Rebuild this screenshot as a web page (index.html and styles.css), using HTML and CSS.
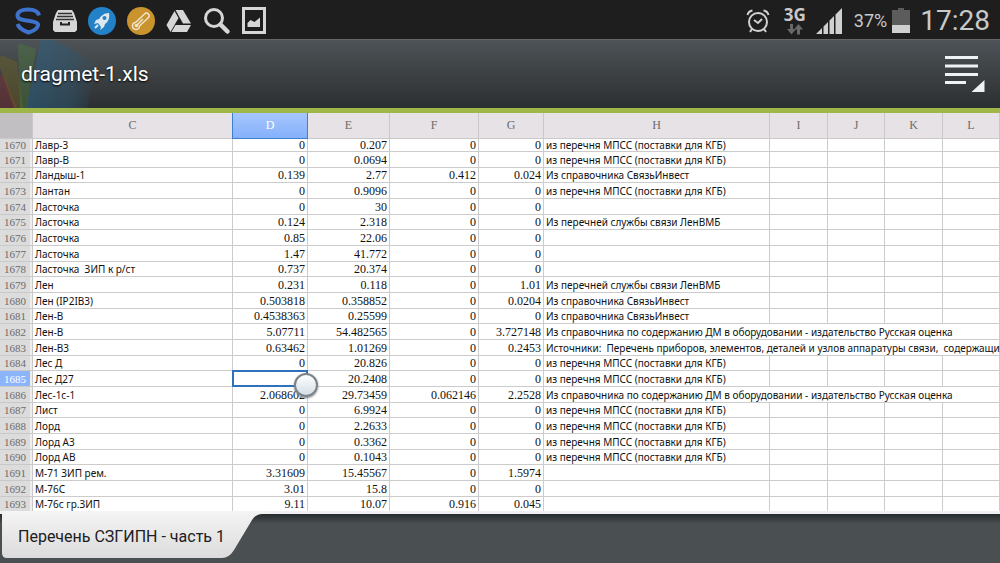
FILE: index.html
```html
<!DOCTYPE html>
<html lang="ru">
<head>
<meta charset="utf-8">
<title>dragmet-1.xls</title>
<link rel="stylesheet" href="styles.css">
</head>
<body>
<div class="status">
  <div class="notices">
    <svg width="28" height="28" viewBox="0 0 28 28" fill="none" stroke="#3f72cc" stroke-width="4"><path d="M25 8.500C24 3.500 18 2.500 14 2.500C8 2.500 3.500 4.500 3.500 8.500C3.500 13.500 11 13 16 14C22 15 24.500 16 24 18.500C23 22 18 24.500 14.500 25.500C9 23.500 5 21.500 3.500 17"/></svg>
    <svg width="24" height="24" viewBox="0 0 24 24"><path d="M5 1h14l2 3 3 9v8l-2 2H2l-2-2v-8l3-9z" fill="#d6d6d6"/><path d="M5 4.500h14M4 7.500h16M3 10.500h18" stroke="#333" stroke-width="1.400"/><path d="M7 13v3.500h10V13z" fill="#222"/><path d="M9 13h6v1.500H9z" fill="#d6d6d6"/></svg>
    <svg width="28" height="28" viewBox="0 0 28 28"><circle cx="14" cy="14" r="14" fill="#2381c7"/><path d="M21 6c-5 0-8 3-10 6l-3 1-2 4 4-1 3 4-1 3 4-3 1-3c3-2 5-6 4-11z" fill="#dce8ef"/><circle cx="16.500" cy="11" r="2" fill="#2381c7"/><path d="M7 21l3-3" stroke="#dce8ef" stroke-width="2"/></svg>
    <svg width="28" height="28" viewBox="0 0 28 28"><circle cx="14" cy="14" r="14" fill="#c9942d"/><path d="M8.500 15.500L17.500 7a2.500 2.500 0 0 1 4 3.500L12.500 19A3.500 3.500 0 1 1 8.500 15.500z" fill="none" stroke="#f1e5cf" stroke-width="1.400"/><circle cx="9.500" cy="18.500" r="1.800" fill="#f1e5cf"/><path d="M10 18l6-6" stroke="#f1e5cf" stroke-width="1.400"/></svg>
    <svg width="26" height="24" viewBox="0 0 26 24" fill="#d6d6d6"><path d="M9.500 1h7.500l8 13.500h-8z"/><path d="M8.500 2l4 7-8 14-4-7z"/><path d="M9.500 16H25l-4 7H5.500z"/></svg>
    <svg width="28" height="28" viewBox="0 0 28 28" fill="none" stroke="#d6d6d6"><circle cx="11" cy="11" r="8.500" stroke-width="3"/><path d="M17.500 17.500l7 7" stroke-width="4.500" stroke-linecap="round"/></svg>
    <svg width="24" height="27" viewBox="0 0 24 27"><path d="M1.500 1.500h21v24h-21z" fill="none" stroke="#d6d6d6" stroke-width="3"/><path d="M5.500 20v-4l3-3 4 2 5.500-4.500v9.500z" fill="#d6d6d6"/></svg>
  </div>
  <div class="signals">
    <svg width="24" height="24" viewBox="0 0 24 24" fill="none" stroke="#d0d0d0" stroke-width="2"><circle cx="12" cy="13" r="9"/><path d="M8 11l4 3 4-4M1.500 6q1-4 5-4.500M22.500 6q-1-4-5-4.500M6 20l-2 3M18 20l2 3"/></svg>
    <div class="network"><span>3G</span><svg width="16" height="12" viewBox="0 0 16 12" fill="#686868"><path d="M3 1h3v5h3l-4.500 5.500L0 6h3z"/><path d="M10 11.500h3v-5h3L11.500 1 7 6.500h3z"/></svg></div>
    <svg width="26" height="26" viewBox="0 0 26 26" fill="#d0d0d0"><path d="M0 26l6-6v6zM7.500 18.500l4.500-4.500v12H7.500zM13.500 12.500L18 8v18h-4.500zM19.500 6.500l6.500-6.500v26h-6.500z"/></svg>
    <span class="percent">37%</span>
    <svg width="18" height="26" viewBox="0 0 18 26"><path d="M6 0h6v2h6v15H0V2h6z" fill="#5c5c5c"/><path d="M0 17h18v8H0z" fill="#d0d0d0"/></svg>
    <time class="clock">17:28</time>
  </div>
</div>
<header class="appbar">
  <svg class="fan" width="110" height="68" viewBox="0 0 110 68"><defs><linearGradient id="blue" x2="1" y2="0"><stop offset="0" stop-color="#2f6283" stop-opacity=".6"/><stop offset=".6" stop-color="#2f5873" stop-opacity=".5"/><stop offset="1" stop-color="#2f5873" stop-opacity="0"/></linearGradient></defs><path d="M0 34l5 3 12 31H0z" fill="#84323a" opacity=".45"/><path d="M0 17q1-2 3-1l14 6 6 46H14L0 28z" fill="#6a6028" opacity=".5"/><path d="M18 6q0-3 4-2l14 5-9 59h-7z" fill="#4c7440" opacity=".5"/><path d="M41 0h12l45 24-11 44H26z" fill="url(#blue)"/></svg>
  <h1 class="title">dragmet-1.xls</h1>
  <button class="menu" aria-label="Меню"><svg width="40" height="38" viewBox="0 0 40 38" fill="#eef2f4"><path d="M0 1h33v3H0zM0 9.500h33v3H0zM0 18h33v3H0zM0 26h21v3H0zM39.500 25v12H26.500z"/></svg></button>
</header>
<main class="sheet">
<table class="grid">
<colgroup><col class="w-num"><col class="w-c"><col class="w-d"><col class="w-e"><col class="w-f"><col class="w-g"><col class="w-h"><col class="w-i"><col class="w-j"><col class="w-i"><col></colgroup>
<thead><tr><th class="corner"></th><th>C</th><th class="active">D</th><th>E</th><th>F</th><th>G</th><th>H</th><th>I</th><th>J</th><th>K</th><th>L</th></tr></thead>
<tbody id="rows"></tbody>
</table>
</main>
<footer class="tabs">
  <button class="tab"><svg class="tabshape" viewBox="0 0 270 48" width="270" height="48"><defs><linearGradient id="paper" x2="0" y2="1"><stop offset="0" stop-color="#f4f4f4"/><stop offset="1" stop-color="#dcdcdc"/></linearGradient></defs><path d="M2 0h268v3h-8q-6 0-10 6l-18 30q-5 8-12 8H7q-5 0-5-5z" fill="url(#paper)"/></svg><span class="tabname">Перечень СЗГИПН - часть 1</span></button>
</footer>
<script src="rows.js"></script>
</body>
</html>
```
FILE: styles.css
```css
* { box-sizing: border-box; }
body { margin: 0; height: 100vh; display: flex; flex-direction: column; background: #4a4f52; font-family: Roboto, "Noto Sans", sans-serif; overflow: hidden; }
svg { display: block; flex: none; }
button { border: 0; padding: 0; background: none; font: inherit; }

.status { height: 39px; flex: none; display: flex; justify-content: space-between; align-items: center; padding: 2px 10px 0 14px; background: #1e1e1e; color: #c9c9c9; }
.notices, .signals { display: flex; align-items: center; }
.notices { gap: 11px; }
.signals { gap: 10px; }
.network { display: flex; flex-direction: column; align-items: center; margin-left: 4px; font: bold 17px/16px "Open Sans", sans-serif; }
.percent { margin: 0 -5px 0 2px; font-size: 18px; }
.clock { font-size: 28px; line-height: 36px; }

.appbar { height: 69px; flex: none; position: relative; display: flex; justify-content: space-between; align-items: center; padding: 0 15px 0 21px; background: linear-gradient(#4e5357, #2b2f31); border-top: 1px solid #63676a; }
.fan { position: absolute; left: 0; top: 0; }
.title { position: relative; margin: 0; font-size: 21px; font-weight: 400; color: #fff; text-shadow: 0 1px 2px #000; }

.sheet { flex: 1; min-height: 0; overflow: hidden; background: #fff; border-top: 5px solid #9fb649; }
.grid { width: 100%; table-layout: fixed; border-collapse: separate; border-spacing: 0; font-family: "Noto Sans", sans-serif; font-size: 10px; color: #111; }
.w-num { width: 33px; }
.w-c { width: 200px; }
.w-d { width: 75px; }
.w-e { width: 82px; }
.w-f { width: 89px; }
.w-g { width: 65px; }
.w-h { width: 226px; }
.w-i { width: 58px; }
.w-j { width: 57px; }
th { padding: 0; font-family: "Liberation Serif", serif; font-weight: 400; color: #6b6b6b; border-right: 1px solid #c9c9c9; border-bottom: 1px solid #c9c9c9; }
thead th { height: 26px; font-size: 12px; background: #e6e2e6; }
thead .corner { background: #c2bfc2; }
thead .active { background: linear-gradient(#a6c6fd, #85b0fb); color: #fff; border-color: #3f7fd0; box-shadow: -1px 0 #3f7fd0; }
tbody tr { height: 16px; }
tbody tr:nth-child(3n) { height: 15px; }
tbody tr:first-child { height: 13px; }
tbody th { padding-right: 2px; font-size: 11px; line-height: 14px; background: #dcdcdc; box-shadow: inset -2px 0 #eee; }
tbody tr:first-child > * { line-height: 12px; }
.current th { background: #8cb4fb; color: #fff; }
td { padding: 0 2px; line-height: 14px; white-space: pre; border-right: 1px solid #ccc; border-bottom: 1px solid #ccc; }
.num { text-align: right; font-family: "Liberation Serif", serif; font-size: 12px; }
.cursor { position: relative; }
.cursor::before { content: ""; position: absolute; inset: -1px; border: 2px solid #3071bd; }
.cursor::after { content: ""; position: absolute; right: -11px; bottom: -11px; width: 20px; height: 20px; border: 2px solid #7b828a; border-radius: 50%; background: linear-gradient(#fff, #d3dee6); box-shadow: 0 1px 2px #777; }

.tabs { height: 52px; flex: none; border-top: 3px solid #f0f0f2; background: linear-gradient(#262b2e, #4a4f52 10px); }
.tab { position: relative; display: flex; align-items: center; width: 270px; height: 48px; margin-top: -3px; padding: 2px 0 0 18px; color: #202020; font-size: 16px; }
.tabshape { position: absolute; left: 0; top: 0; }
.tabname { position: relative; }
```
FILE: rows.js
```js
const kgb = 'из перечня МПСС (поставки для КГБ)';
const svyaz = 'Из справочника СвязьИнвест';
const vmb = 'Из перечней службы связи ЛенВМБ';
const rus = 'Из справочника по содержанию ДМ в оборудовании - издательство Русская оценка';
const src = 'Источники:  Перечень приборов, элементов, деталей и узлов аппаратуры связи,  содержащих д';
const data = [
  ['Лавр-3', '0', '0.207', '0', '0', kgb],
  ['Лавр-В', '0', '0.0694', '0', '0', kgb],
  ['Ландыш-1', '0.139', '2.77', '0.412', '0.024', svyaz],
  ['Лантан', '0', '0.9096', '0', '0', kgb],
  ['Ласточка', '0', '30', '0', '0', ''],
  ['Ласточка', '0.124', '2.318', '0', '0', vmb],
  ['Ласточка', '0.85', '22.06', '0', '0', ''],
  ['Ласточка', '1.47', '41.772', '0', '0', ''],
  ['Ласточка  ЗИП к р/ст', '0.737', '20.374', '0', '0', ''],
  ['Лен', '0.231', '0.118', '0', '1.01', vmb],
  ['Лен (IP2IB3)', '0.503818', '0.358852', '0', '0.0204', svyaz],
  ['Лен-В', '0.4538363', '0.25599', '0', '0', svyaz],
  ['Лен-В', '5.07711', '54.482565', '0', '3.727148', rus],
  ['Лен-В3', '0.63462', '1.01269', '0', '0.2453', src],
  ['Лес Д', '0', '20.826', '0', '0', kgb],
  ['Лес Д27', '0', '20.2408', '0', '0', kgb],
  ['Лес-1с-1', '2.068602', '29.73459', '0.062146', '2.2528', rus],
  ['Лист', '0', '6.9924', '0', '0', kgb],
  ['Лорд', '0', '2.2633', '0', '0', kgb],
  ['Лорд А3', '0', '0.3362', '0', '0', kgb],
  ['Лорд АВ', '0', '0.1043', '0', '0', kgb],
  ['М-71 ЗИП рем.', '3.31609', '15.45567', '0', '1.5974', ''],
  ['М-76С', '3.01', '15.8', '0', '0', ''],
  ['М-76с гр.ЗИП', '9.11', '10.07', '0.916', '0.045', '']
];
const body = document.getElementById('rows');
data.forEach((values, i) => {
  const row = body.insertRow();
  const number = 1670 + i;
  const head = document.createElement('th');
  head.scope = 'row';
  head.textContent = number;
  row.append(head);
  values.forEach((value, column) => {
    const cell = row.insertCell();
    cell.textContent = value;
    if (column > 0 && column < 5) cell.className = 'num';
  });
  if (values[5].length > 50) row.lastChild.colSpan = 5;
  else for (let k = 0; k < 4; k++) row.insertCell();
  if (number === 1685) {
    row.className = 'current';
    row.cells[2].classList.add('cursor');
  }
});
```
